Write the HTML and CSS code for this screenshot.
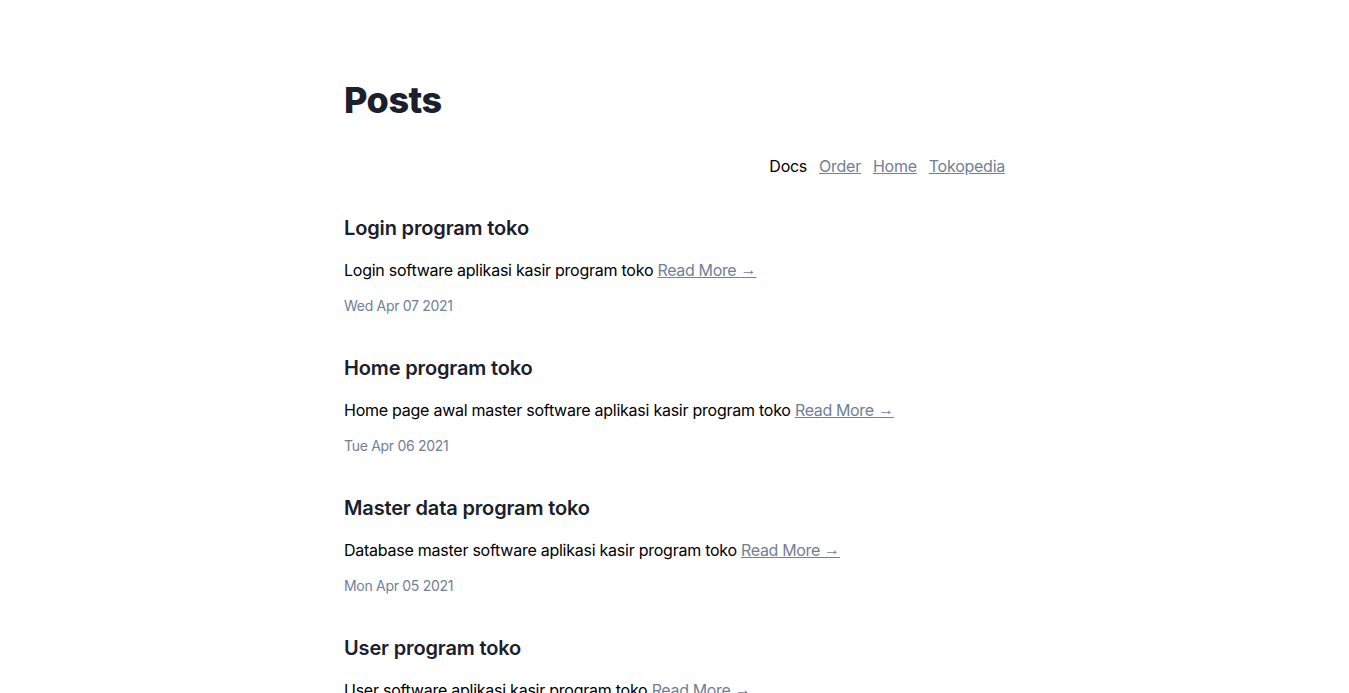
FILE: index.html
```html
<!DOCTYPE html>
<html>
<head>
<meta charset="utf-8">
<link rel="stylesheet" href="styles.css">
</head>
<body>
<main class="container">
  <h1 class="page-title">Posts</h1>
  <nav class="nav">
    <span class="nav-current">Docs</span>
    <a href="#" class="nav-link">Order</a>
    <a href="#" class="nav-link">Home</a>
    <a href="#" class="nav-link">Tokopedia</a>
  </nav>
  <section class="posts">
    <article class="post">
      <h2 class="post-title">Login program toko</h2>
      <p class="post-excerpt">Login software aplikasi kasir program toko <a href="#" class="read-more">Read More <span class="arrow">→</span></a></p>
      <div class="post-date">Wed Apr 07 2021</div>
    </article>
    <article class="post">
      <h2 class="post-title">Home program toko</h2>
      <p class="post-excerpt">Home page awal master software aplikasi kasir program toko <a href="#" class="read-more">Read More <span class="arrow">→</span></a></p>
      <div class="post-date">Tue Apr 06 2021</div>
    </article>
    <article class="post">
      <h2 class="post-title">Master data program toko</h2>
      <p class="post-excerpt">Database master software aplikasi kasir program toko <a href="#" class="read-more">Read More <span class="arrow">→</span></a></p>
      <div class="post-date">Mon Apr 05 2021</div>
    </article>
    <article class="post">
      <h2 class="post-title">User program toko</h2>
      <p class="post-excerpt">User software aplikasi kasir program toko <a href="#" class="read-more">Read More <span class="arrow">→</span></a></p>
      <div class="post-date">Sun Apr 04 2021</div>
    </article>
  </section>
</main>
</body>
</html>
```
FILE: styles.css
```css
* { box-sizing: border-box; }
body {
  margin: 0;
  font-family: Inter, "Liberation Sans", sans-serif;
  color: #000;
  background: #fff;
}
.container {
  max-width: 661px;
  margin: 0 auto;
  padding-top: 78px;
}
.page-title {
  margin: 0;
  font-size: 36px;
  line-height: 44px;
  font-weight: 800;
  color: #1a202c;
  letter-spacing: -0.5px;
}
.nav {
  display: flex;
  justify-content: flex-end;
  gap: 12px;
  margin-top: 32px;
  font-size: 16px;
  line-height: 24px;
  letter-spacing: -0.25px;
}
.nav-current { color: #000; }
.nav-link {
  color: #718096;
  text-decoration: underline;
}
.posts {
  margin-top: 36px;
}
.post {
  height: 140px;
}
.post-title {
  margin: 0;
  font-size: 20px;
  line-height: 28px;
  font-weight: 600;
  color: #1a202c;
  letter-spacing: -0.15px;
}
.post-excerpt {
  margin: 14px 0 0;
  font-size: 16px;
  line-height: 28px;
  letter-spacing: -0.25px;
}
.read-more {
  color: #718096;
  text-decoration: underline;
  letter-spacing: -0.35px;
}
.arrow {
  font-family: "Liberation Sans", sans-serif;
  letter-spacing: 0;
  vertical-align: 1px;
}
.post-date {
  margin-top: 12px;
  font-size: 14px;
  line-height: 20px;
  color: #718096;
  letter-spacing: -0.3px;
}
```
